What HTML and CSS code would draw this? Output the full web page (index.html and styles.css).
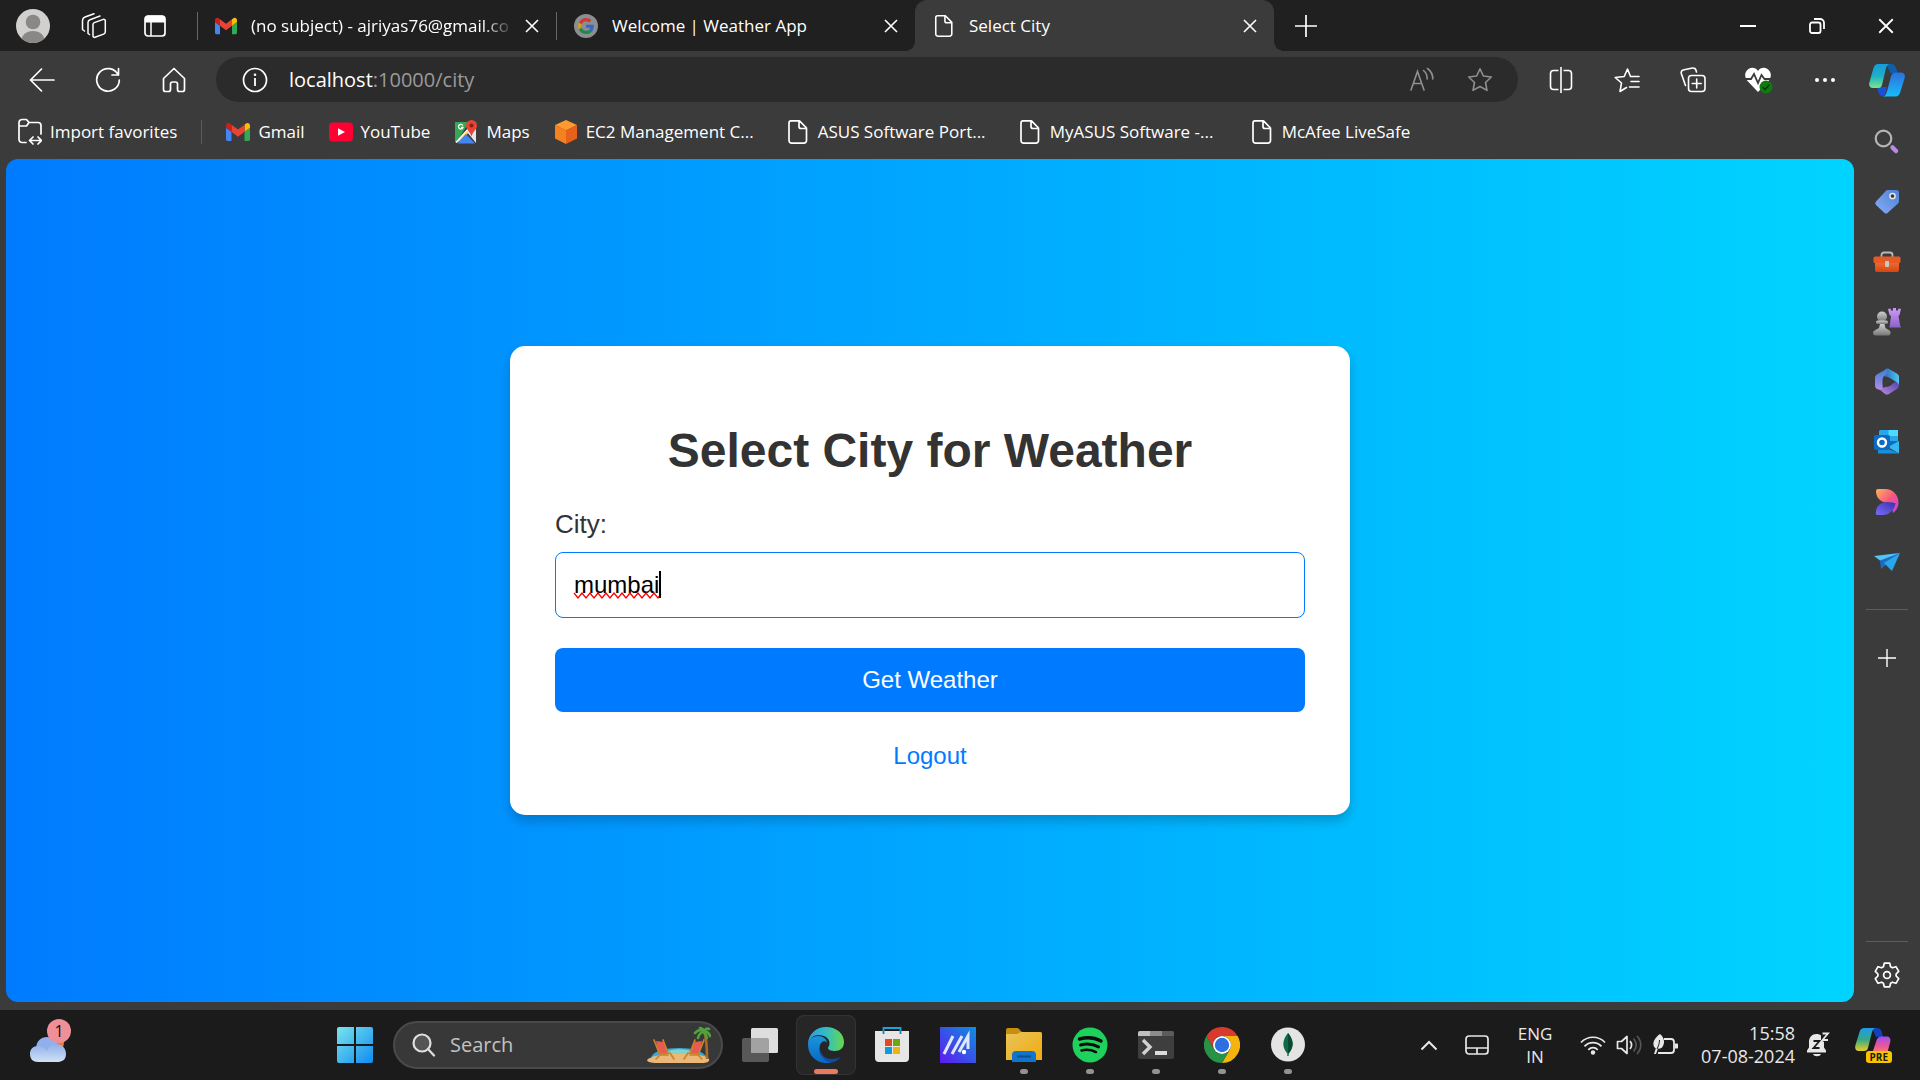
FILE: index.html
```html
<!DOCTYPE html>
<html lang="en">
<head>
<meta charset="utf-8">
<title>Select City</title>
<link rel="stylesheet" href="styles.css">
</head>
<body>
<svg class="defs" width="0" height="0" aria-hidden="true">
  <defs>
    <symbol id="doc" viewBox="0 0 24 24"><path fill="none" stroke="#fff" stroke-width="1.7" stroke-linejoin="round" d="M5 .9h8.500L20.500 8v12.600a2.500 2.500 0 0 1-2.500 2.500H5.500A2.500 2.500 0 0 1 3 20.600V3A2.100 2.100 0 0 1 5 .9zM13 1v5.500A2 2 0 0 0 15 8.500h5.500"/></symbol>
    <symbol id="x" viewBox="0 0 16 16"><path fill="none" stroke="#fff" stroke-width="1.600" d="M2 2l12 12M14 2L2 14"/></symbol>
    <symbol id="gmail" viewBox="52 42 88 66"><path fill="#4285f4" d="M58 108h14V74L52 59v43c0 3.320 2.690 6 6 6"/><path fill="#34a853" d="M120 108h14c3.320 0 6-2.690 6-6V59l-20 15"/><path fill="#fbbc04" d="M120 48v26l20-15v-8c0-7.420-8.470-11.650-14.400-7.200"/><path fill="#ea4335" d="M72 74V48l24 18 24-18v26L96 92"/><path fill="#c5221f" d="M52 51v8l20 15V48l-5.600-4.200c-5.940-4.450-14.400-.22-14.400 7.200"/></symbol>
    <linearGradient id="gCopA" x1="0" y1="0" x2="0" y2="1"><stop offset="0" stop-color="#169bdc"/><stop offset=".5" stop-color="#1cb0c8"/><stop offset="1" stop-color="#7be58a"/></linearGradient>
    <linearGradient id="gCopB" x1="0" y1="0" x2="0" y2="1"><stop offset="0" stop-color="#2d6fdc"/><stop offset="1" stop-color="#16bdfb"/></linearGradient>
    <linearGradient id="gPreA" x1="0" y1="0" x2="0" y2="1"><stop offset="0" stop-color="#1f9be8"/><stop offset=".5" stop-color="#35a88a"/><stop offset="1" stop-color="#e8cf20"/></linearGradient>
    <linearGradient id="gPreB" x1="0" y1="0" x2="0" y2="1"><stop offset="0" stop-color="#a34df0"/><stop offset=".6" stop-color="#ee5a90"/><stop offset="1" stop-color="#ff8a50"/></linearGradient>
    <linearGradient id="gWin" x1="0" y1="0" x2="1" y2="1"><stop offset="0" stop-color="#79e4ee"/><stop offset="1" stop-color="#0f8cf0"/></linearGradient>
    <linearGradient id="gEdgeA" x1="0" y1="0" x2="1" y2="0"><stop offset="0" stop-color="#2a9fe0"/><stop offset=".5" stop-color="#33bcc6"/><stop offset="1" stop-color="#66d94a"/></linearGradient>
    <linearGradient id="gEdgeB" x1="0" y1="0" x2="0" y2="1"><stop offset="0" stop-color="#1b95dc"/><stop offset="1" stop-color="#0768c4"/></linearGradient>
    <linearGradient id="gAsus" x1="0" y1="1" x2="1" y2="0"><stop offset="0" stop-color="#6018f0"/><stop offset="1" stop-color="#0c90e0"/></linearGradient>
    <linearGradient id="gFold" x1="0" y1="0" x2="1" y2="1"><stop offset="0" stop-color="#e9c45c"/><stop offset="1" stop-color="#f0ab0c"/></linearGradient>
    <linearGradient id="gTag" x1="0" y1="1" x2="1" y2="0"><stop offset="0" stop-color="#86aef5"/><stop offset="1" stop-color="#4f7fd6"/></linearGradient>
    <linearGradient id="gBox" x1="0" y1="0" x2="0" y2="1"><stop offset="0" stop-color="#f37440"/><stop offset="1" stop-color="#d8450c"/></linearGradient>
    <linearGradient id="gPawn" x1="0" y1="0" x2="0" y2="1"><stop offset="0" stop-color="#cfcfcf"/><stop offset="1" stop-color="#777"/></linearGradient>
    <linearGradient id="gRook" x1="0" y1="0" x2="0" y2="1"><stop offset="0" stop-color="#d09bf8"/><stop offset="1" stop-color="#8a63c8"/></linearGradient>
    <linearGradient id="gM1" x1="0" y1="0" x2="0" y2="1"><stop offset="0" stop-color="#3f7fd0"/><stop offset="1" stop-color="#b28bec"/></linearGradient>
    <linearGradient id="gM2" x1="0" y1="0" x2="1" y2="0"><stop offset="0" stop-color="#2b60b8"/><stop offset="1" stop-color="#4fc8f0"/></linearGradient>
    <linearGradient id="gM3" x1="0" y1="1" x2="1" y2="0"><stop offset="0" stop-color="#c08ae8"/><stop offset="1" stop-color="#4a3f9c"/></linearGradient>
    <linearGradient id="gD1" x1="0" y1="0" x2="1" y2="1"><stop offset="0" stop-color="#ffb25c"/><stop offset=".5" stop-color="#f7587e"/><stop offset="1" stop-color="#b93ef0"/></linearGradient>
    <linearGradient id="gD2" x1="0" y1="1" x2="1" y2="0"><stop offset="0" stop-color="#7a6cff"/><stop offset="1" stop-color="#3a2fa8"/></linearGradient>
    <linearGradient id="gCloud" x1="0" y1="0" x2="0" y2="1"><stop offset="0" stop-color="#8fb0ea"/><stop offset="1" stop-color="#d3e0f6"/></linearGradient>
  </defs>
</svg>

<header class="tabbar">
  <div class="tools">
    <button class="tool" aria-label="Profile"><svg width="34" height="34" viewBox="0 0 34 34"><clipPath id="av"><circle cx="17" cy="17" r="17"/></clipPath><g clip-path="url(#av)"><path fill="#d2d0ce" d="M0 0h34v34H0z"/><circle cx="17" cy="13" r="7.300" fill="#8a8886"/><path fill="#8a8886" d="M5 34c0-8 5-12 12-12s12 4 12 12z"/></g></svg></button>
    <button class="tool" aria-label="Workspaces"><svg width="26" height="26" viewBox="0 0 26 26" fill="none" stroke="#fff" stroke-width="1.500" stroke-linejoin="round" stroke-linecap="round"><path d="M12 11.500a2 2 0 0 1 1.300-1.900l9-3.200a1.500 1.500 0 0 1 2 1.400v11a2.500 2.500 0 0 1-1.700 2.300L14 24.300a1.500 1.500 0 0 1-2-1.400zM8.500 21.500l-1.500-1v-11a3 3 0 0 1 2-2.800L19 3M3.500 18l-2-1.500v-9A4 4 0 0 1 4 4l9-3.300"/></svg></button>
    <button class="tool" aria-label="Tab actions menu"><svg width="24" height="24" viewBox="0 0 24 24"><rect x="2" y="2" width="20" height="20" rx="3" fill="none" stroke="#fff" stroke-width="1.700"/><path fill="#fff" d="M2 5a3.500 3.500 0 0 1 3.500-3.500h13A3.500 3.500 0 0 1 22 5v3.500H2z"/><path stroke="#fff" stroke-width="1.500" d="M8 8v14"/></svg></button>
  </div>
  <nav class="tabs" aria-label="Tabs">
    <div class="tab">
      <svg class="tabicon" width="22" height="22"><use href="#gmail"/></svg>
      <span class="tabtitle fade">(no subject) - ajriyas76@gmail.co</span>
      <button class="close" aria-label="Close tab"><svg width="16" height="16"><use href="#x"/></svg></button>
    </div>
    <div class="tab">
      <svg class="tabicon" width="24" height="24" viewBox="0 0 48 48"><circle cx="24" cy="24" r="24" fill="#8b8f94"/><g transform="translate(8 8) scale(.67)"><path fill="#d33a2f" d="M24 9.500c3.540 0 6.710 1.220 9.210 3.600l6.850-6.850C35.900 2.380 30.470 0 24 0 14.620 0 6.510 5.380 2.560 13.220l7.980 6.190C12.430 13.720 17.740 9.500 24 9.500z"/><path fill="#3467c8" d="M46.980 24.550c0-1.570-.15-3.090-.38-4.550H24v9.020h12.940c-.58 2.960-2.260 5.480-4.780 7.180l7.730 6c4.510-4.180 7.090-10.360 7.090-17.650z"/><path fill="#d8a010" d="M10.530 28.590a14.500 14.500 0 0 1 0-9.180l-7.980-6.190a24 24 0 0 0 0 21.560z"/><path fill="#238a45" d="M24 48c6.480 0 11.930-2.130 15.890-5.810l-7.730-6c-2.150 1.450-4.920 2.300-8.160 2.300-6.260 0-11.570-4.220-13.470-9.910l-7.980 6.190C6.510 42.620 14.620 48 24 48z"/></g></svg>
      <span class="tabtitle">Welcome | Weather App</span>
      <button class="close" aria-label="Close tab"><svg width="16" height="16"><use href="#x"/></svg></button>
    </div>
    <div class="tab active">
      <svg class="tabicon" width="22" height="24"><use href="#doc"/></svg>
      <span class="tabtitle">Select City</span>
      <button class="close" aria-label="Close tab"><svg width="16" height="16"><use href="#x"/></svg></button>
    </div>
    <button class="newtab" aria-label="New tab"><svg width="22" height="22" viewBox="0 0 22 22"><path stroke="#fff" stroke-width="1.700" d="M11 0v22M0 11h22"/></svg></button>
  </nav>
  <div class="winbtns">
    <button class="win" aria-label="Minimize"><svg width="16" height="16" viewBox="0 0 16 16"><path stroke="#fff" stroke-width="2" d="M0 8h16"/></svg></button>
    <button class="win" aria-label="Restore"><svg width="16" height="16" viewBox="0 0 16 16" fill="none" stroke="#fff" stroke-width="1.800"><rect x="1" y="4.500" width="10.500" height="10.500" rx="2"/><path d="M5 1h6a4 4 0 0 1 4 4v6"/></svg></button>
    <button class="win" aria-label="Close"><svg width="18" height="18"><use href="#x"/></svg></button>
  </div>
</header>

<div class="toolbar">
  <button class="ico" aria-label="Back"><svg width="26" height="26" viewBox="0 0 26 26" fill="none" stroke="#fff" stroke-width="1.700" stroke-linecap="round" stroke-linejoin="round"><path d="M25 13H1.500M12.500 2L1.500 13l11 11"/></svg></button>
  <button class="ico" aria-label="Refresh"><svg width="26" height="26" viewBox="0 0 26 26" fill="none" stroke="#fff" stroke-width="1.700" stroke-linecap="round" stroke-linejoin="round"><path d="M23.200 8A11.300 11.300 0 1 0 24.300 13M23.500 1.500V8H17"/></svg></button>
  <button class="ico" aria-label="Home"><svg width="26" height="26" viewBox="0 0 26 26" fill="none" stroke="#fff" stroke-width="1.700" stroke-linejoin="round"><path d="M2.500 11.500L13 1.500l10.500 10v11a2 2 0 0 1-2 2h-3a2 2 0 0 1-2-2V17a2 2 0 0 0-2-2h-3a2 2 0 0 0-2 2v5.500a2 2 0 0 1-2 2h-3a2 2 0 0 1-2-2z"/></svg></button>
  <div class="address">
    <button class="site" aria-label="View site information"><svg width="26" height="26" viewBox="0 0 26 26"><circle cx="13" cy="13" r="11.500" fill="none" stroke="#fff" stroke-width="1.700"/><circle cx="13" cy="7.800" r="1.300" fill="#fff"/><path stroke="#fff" stroke-width="1.800" d="M13 11v8"/></svg></button>
    <p class="url">localhost<span class="dim">:10000/city</span></p>
    <button class="inbar" aria-label="Read aloud"><svg width="26" height="26" viewBox="0 0 26 26" fill="none" stroke="#8f8f8f" stroke-width="1.600" stroke-linecap="round"><path d="M2 23L8.500 4.500 15 23M4.500 16.500h8M14.500 3.500c2.500 2 3.700 5 3.700 8.500M18.500 1.500c3.500 2.500 5.300 6.300 5.300 10.500"/></svg></button>
    <button class="inbar" aria-label="Add to favorites"><svg width="26" height="26" viewBox="0 0 26 26" fill="none" stroke="#8f8f8f" stroke-width="1.600" stroke-linejoin="round"><path d="M13 1.800l3.400 7.200 7.900 1-5.800 5.500 1.500 7.900-7-3.900-7 3.900 1.500-7.900L1.700 10l7.900-1z"/></svg></button>
  </div>
  <button class="ico" aria-label="Split screen"><svg width="24" height="26" viewBox="0 0 24 26" fill="none" stroke="#fff" stroke-width="1.600"><path d="M9.500 3.500H4.500a3 3 0 0 0-3 3v13a3 3 0 0 0 3 3h5M14.500 3.500h5a3 3 0 0 1 3 3v13a3 3 0 0 1-3 3h-5M12 0v26"/></svg></button>
  <button class="ico" aria-label="Favorites"><svg width="26" height="26" viewBox="0 0 26 26" fill="none" stroke="#fff" stroke-width="1.600" stroke-linejoin="round" stroke-linecap="round"><path d="M25 9.500h-8.500l-3-7.500-3.300 7.500-9 1 6.300 5.500L6 24.500l6.500-4M17 14.500h8M15.500 20h9.500"/></svg></button>
  <button class="ico" aria-label="Collections"><svg width="26" height="26" viewBox="0 0 26 26" fill="none" stroke="#fff" stroke-width="1.600" stroke-linecap="round"><rect x="8.500" y="8.500" width="16.500" height="16" rx="3"/><path d="M16.700 12v9M12.200 16.500h9M5.500 18.500L1.300 6.500A3 3 0 0 1 3 3l9.500-2A3 3 0 0 1 16 3.500l.5 1.500"/></svg></button>
  <button class="ico" aria-label="Browser essentials"><svg width="28" height="28" viewBox="0 0 28 28"><path fill="#fff" d="M13 26L2.500 15C-1 11-.5 5.500 3.500 3 7 .8 11 2 13 5c2-3 6-4.200 9.500-2 4 2.500 4.500 8 1 12z"/><path fill="none" stroke="#3b3b3b" stroke-width="1.800" d="M0 13h6l3-5 4 9 3.500-8 3 4h7"/><circle cx="21" cy="21" r="6.500" fill="#0f7b0f"/><path fill="none" stroke="#063d06" stroke-width="1.600" d="M17.500 21l2.500 2.500 4.500-5"/></svg></button>
  <button class="ico" aria-label="Settings and more"><svg width="22" height="6" viewBox="0 0 22 6" fill="#fff"><circle cx="3" cy="3" r="2"/><circle cx="11" cy="3" r="2"/><circle cx="19" cy="3" r="2"/></svg></button>
  <button class="ico end" aria-label="Copilot"><svg width="36" height="34" viewBox="0 0 36 34"><path fill="#0f5fa8" d="M17 1h5c3 0 4.500 2 5.500 5l1 4h-7z"/><path fill="#1c4fd6" d="M8 24h10l-1 5c-1 3-2 4-4 4s-3-2-4-5z"/><path fill="url(#gCopA)" d="M9 1h12c-2 0-3 1.500-4 4l-4 17c-.6 2-1.500 3-4 3H4c-3.500 0-4.500-2.500-3.500-6l4-14C5.500 2 7 1 9 1z"/><path fill="url(#gCopB)" d="M27 9.500h5c3.500 0 4.500 2.500 3.500 6l-4 13c-1 3.500-2.500 5-5 5H13c3 0 4-2 5-5l4-15c.7-3 2-4 5-4z"/></svg></button>
</div>

<div class="shell">
  <div class="left">
    <nav class="favs" aria-label="Favorites bar">
      <a class="fav" href="#"><svg width="24" height="28" viewBox="0 0 24 28" fill="none" stroke="#fff" stroke-width="1.700" stroke-linecap="round" stroke-linejoin="round"><path d="M8 24.500H4a3 3 0 0 1-3-3V4.500a3 3 0 0 1 3-3h4.500L11 4.500h9a3 3 0 0 1 3 3V16M1 8h7.500L11 4.500M12 22.500h11M15 19l-3.500 3.500L15 26M20 19l3.500 3.500L20 26"/></svg><span class="favname">Import favorites</span></a>
      <span class="favsep"></span>
      <a class="fav" href="#"><svg width="24" height="18"><use href="#gmail"/></svg><span class="favname">Gmail</span></a>
      <a class="fav" href="#"><svg width="24" height="24" viewBox="0 0 24 24"><rect y="2.500" width="24" height="19" rx="4" fill="#f03"/><path fill="#fff" d="M9 8.200l7 3.800-7 3.800z"/></svg><span class="favname">YouTube</span></a>
      <a class="fav" href="#"><svg width="24" height="24" viewBox="0 0 24 24"><path fill="#34a853" d="M1 2h14L3 22H1z"/><path fill="#fbc02d" d="M18 5L2 23l4-2L20 8z"/><path fill="#e4e6ea" d="M13 12l9 11V9l-4-4z"/><path fill="#4285f4" d="M3.500 23.500L12 14l9 9.500z"/><path fill="none" stroke="#fff" stroke-width="1.600" d="M2 22.500L17 6"/><path fill="none" stroke="#fff" stroke-width="1.300" d="M8.800 5.500A2.300 2.300 0 1 0 9 7.500H7"/><path fill="#ea4335" d="M17.500 0A5.500 5.500 0 0 1 23 5.500c0 4-4.500 6-5.500 11.500C16.500 11.500 12 9.500 12 5.500A5.500 5.500 0 0 1 17.500 0z"/><circle cx="17.500" cy="5.500" r="2" fill="#8c1d18"/></svg><span class="favname">Maps</span></a>
      <a class="fav long" href="#"><svg width="24" height="24" viewBox="0 0 24 24"><path fill="#ff9a2e" d="M12 0l11 5-11 5.500L1 5z"/><path fill="#f58220" d="M1 5l11 5.500V24L1 18.500z"/><path fill="#e8611a" d="M23 5l-11 5.500V24l11-5.500z"/></svg><span class="favname">EC2 Management C...</span></a>
      <a class="fav long" href="#"><svg width="24" height="24"><use href="#doc"/></svg><span class="favname">ASUS Software Port...</span></a>
      <a class="fav long" href="#"><svg width="24" height="24"><use href="#doc"/></svg><span class="favname">MyASUS Software -...</span></a>
      <a class="fav" href="#"><svg width="24" height="24"><use href="#doc"/></svg><span class="favname">McAfee LiveSafe</span></a>
    </nav>
    <main class="page">
      <section class="card">
        <h1 class="title">Select City for Weather</h1>
        <form class="form">
          <label class="label" for="city">City:</label>
          <div class="field">
            <input class="input" id="city" type="text" value="mumbai" spellcheck="false">
            <svg class="spell" width="90" height="30" viewBox="0 0 90 30" aria-hidden="true"><path fill="none" stroke="#f00" stroke-width="1.300" d="M1 23l4 5 4-5 4 5 4-5 4 5 4-5 4 5 4-5 4 5 4-5 4 5 4-5 4 5 4-5 4 5 4-5 4 5 4-5 4 5 4-5 4 5 3-4"/><path stroke="#000" stroke-width="2" d="M87 1v27"/></svg>
          </div>
          <button class="submit" type="button">Get Weather</button>
        </form>
        <a class="logout" href="#">Logout</a>
      </section>
    </main>
  </div>
  <aside class="side">
    <button class="app" aria-label="Search"><svg width="26" height="26" viewBox="0 0 26 26" fill="none"><circle cx="9.500" cy="9.500" r="7.800" stroke="#b5b5b5" stroke-width="2.200"/><path stroke="#b98be8" stroke-width="4.500" stroke-linecap="round" d="M18.500 18.500l3.500 3.500"/></svg></button>
    <button class="app" aria-label="Shopping"><svg width="26" height="26" viewBox="0 0 26 26"><path fill="url(#gTag)" d="M14 1h8.500A2.500 2.500 0 0 1 25 3.500V12c0 1-.5 2-1 2.500L13.500 24a2.500 2.500 0 0 1-3 0L2 16a2.500 2.500 0 0 1 0-3.500L12 1.800A3 3 0 0 1 14 1z"/><circle cx="18.500" cy="7" r="2.600" fill="#333" stroke="#e8e8e8" stroke-width="1.500"/></svg></button>
    <button class="app" aria-label="Tools"><svg width="28" height="22" viewBox="0 0 28 22"><path fill="none" stroke="#b8b8b8" stroke-width="1.800" d="M8.500 6V4a2.500 2.500 0 0 1 2.500-2.500h6A2.500 2.500 0 0 1 19.500 4v2"/><path fill="url(#gBox)" d="M2 9h24v10a2 2 0 0 1-2 2H4a2 2 0 0 1-2-2z"/><rect x=".5" y="5.500" width="27" height="6.500" rx="1.500" fill="#e65a24"/><rect x="12" y="10" width="4" height="6" rx="1" fill="#c8c8c8"/></svg></button>
    <button class="app" aria-label="Games"><svg width="28" height="28" viewBox="0 0 28 28"><path fill="url(#gRook)" d="M15 1l2.500-.5.5 2h2V0h3v2.500h2l.5-2L28 1l-1.500 6-1 1L27 17l1 2.500H16.500L18 8l-1.500-1z"/><g fill="url(#gPawn)"><circle cx="9" cy="8.500" r="5"/><rect x="3" y="12.500" width="12" height="3.500" rx="1.700"/><path d="M7 16h4.500l1 4 4 2.500c2 1.500 1 5-1 5h-13c-2.500 0-3.500-3.500-1-5L6 20z"/></g></svg></button>
    <button class="app" aria-label="Microsoft 365"><svg width="26" height="28" viewBox="0 0 26 28"><path fill="url(#gM3)" d="M5 21l3.500-1 9-3.500 7.500-5V17c0 2-.8 3.200-2.200 4L15 26c-1.400.8-2.600.8-4 0z"/><path fill="url(#gM2)" d="M10 2.500L12 1c1-.6 2-.6 3 0l7.800 4.500C24.200 6.300 25 7.500 25 9v8c-.5-1.500-1.500-2.500-3-3.300L14 9l-5-1z"/><path fill="url(#gM1)" d="M13 .8L3.200 6.300C1.800 7.200 1 8.400 1 10v7.500c0 1.600.8 2.800 2.200 3.600 1.900 1 3.900.9 5.500-.6V11c0-1.600.7-2.700 2-3.500 2-1.200 2.800-2.500 2.800-4.500z"/><path fill="#3b3b3b" d="M13.500 9.200l4.300 2.500v5L13.500 19l-4.800-2.300v-5z"/></svg></button>
    <button class="app" aria-label="Outlook"><svg width="26" height="26" viewBox="0 0 26 26"><rect x="5" y="1" width="19" height="14" rx="1.500" fill="#28a8ea"/><path fill="#50d9ff" d="M14.500 1H24v6h-9.500z"/><path fill="#0f6cbd" d="M5 12h20v5H5z"/><path fill="#1490df" d="M4 24.500V15l21 9.500z"/><path fill="#35b8f1" d="M25 12v12.500L14 18z"/><rect x="0" y="6" width="16" height="15" rx="2" fill="#0a6ac4"/><circle cx="8" cy="13.500" r="4" fill="none" stroke="#fff" stroke-width="2.400"/></svg></button>
    <button class="app" aria-label="Designer"><svg width="24" height="26" viewBox="0 0 24 26"><path fill="url(#gD1)" d="M3 0h7c8 0 13.500 6 13.500 13.500 0 4-2 8-5.500 10.500-1-8-3-10-8-10.500C4.500 12 1 8 1 2a2 2 0 0 1 2-2z"/><path fill="url(#gD2)" d="M1 23c0-6 5-10 11-10 5 0 8 1.500 8.500 1-1 7-6 12-12.500 12H3a2 2 0 0 1-2-3z"/></svg></button>
    <button class="app" aria-label="Drop"><svg width="26" height="20" viewBox="0 0 26 20"><path fill="#4fc6f4" d="M0 4L26 1 8 10z"/><path fill="#1a6dc4" d="M6 8.500L26 1 7 17z"/><path fill="#2aa6ea" d="M10 11L26 1l-8 18z"/></svg></button>
    <span class="sidesep"></span>
    <button class="app add" aria-label="Customize"><svg width="18" height="18" viewBox="0 0 18 18"><path stroke="#fff" stroke-width="1.400" d="M9 0v18M0 9h18"/></svg></button>
    <span class="sidesep last"></span>
    <button class="app gear" aria-label="Settings"><svg width="26" height="26" viewBox="0 0 26 26" fill="none" stroke="#fff" stroke-width="1.700" stroke-linejoin="round"><path d="M10.300 1.200h5.400l.9 3.600 1.800 1 3.600-1.100 2.700 4.700-2.600 2.600v2l2.600 2.600-2.700 4.700-3.600-1.100-1.800 1-.9 3.600h-5.400l-.9-3.600-1.800-1L4 21.300l-2.700-4.700L3.900 14v-2L1.300 9.400 4 4.700l3.600 1.100 1.800-1z"/><circle cx="13" cy="13" r="3.400"/></svg></button>
  </aside>
</div>

<footer class="taskbar">
  <button class="weather" aria-label="Weather"><svg width="38" height="30" viewBox="0 0 38 30"><circle cx="28" cy="9" r="7" fill="#f0801e"/><path fill="#8fb0ea" d="M7 15C7 7 12 3 18 3s11 4 11 10v8H7z"/><path fill="url(#gCloud)" d="M9 12c4 0 7 2 9 5 1-4 4-7 9-7 6 0 10 4 10 10s-4 8-9 8H9c-5 0-8-3-8-8s3-8 8-8z"/></svg><span class="badge">1</span></button>
  <div class="apps">
    <button class="task" aria-label="Start"><svg width="36" height="36" viewBox="0 0 36 36"><path fill="url(#gWin)" d="M2 0h15v17H0V2a2 2 0 0 1 2-2zM19 0h15a2 2 0 0 1 2 2v15H19zM0 19h17v17H2a2 2 0 0 1-2-2zM19 19h17v15a2 2 0 0 1-2 2H19z"/></svg></button>
    <div class="search">
      <svg width="24" height="24" viewBox="0 0 24 24" fill="#555" stroke="#e0e0e0" stroke-width="2.200" stroke-linecap="round"><circle cx="10" cy="10" r="8.500"/><path d="M16 16l6 6.500"/></svg>
      <input class="searchbox" type="text" placeholder="Search" aria-label="Search">
      <svg width="64" height="38" viewBox="0 0 64 38"><path fill="#3aa7d8" d="M4 31c3-6 14-9 28-9s23 3 28 9z"/><path fill="#7fd6c8" d="M20 27c0-5 24-5 26 0l-4 4H24z"/><path fill="#eab97a" d="M0 34c4-4 14-6 31-6s28 1 31 5c1 3-3 4-7 4H10c-6 0-10-1-10-3z"/><path fill="#e85a52" d="M9 15l7 1 5 11 -9 2zM55 15l-7 1-5 11 9 2z"/><g fill="none" stroke="#c9852a" stroke-width="1.700" stroke-linecap="round"><path d="M7 14l6 15M16 14l5 13M9 33l5-5 9-1M23 27l4 6M13 29h8M57 14l-6 15M48 14l-5 13M55 33l-5-5-9-1M41 27l-4 6M51 29h-8"/></g><path fill="none" stroke="#b06a20" stroke-width="2.600" d="M57 5c3 8 3 18 3 28"/><path fill="none" stroke="#4fa23c" stroke-width="2.600" stroke-linecap="round" d="M57 6c-3-3-6-2-9 1M57 6c-3 0-5 2-6 6M57 6c0-2-2-4-4-4M57 6c1-3 3-4 5-3M57 6c3-1 5 1 6 4M57 6c1 1 3 3 3 6"/></svg>
    </div>
    <button class="task" aria-label="Task view"><svg width="36" height="34" viewBox="0 0 36 34"><rect x="0" y="10" width="27" height="24" rx="2" fill="#585858"/><rect x="9" y="0" width="27" height="25" rx="1.500" fill="#dedede"/><path fill="#a2a2a2" d="M9 10h16a2 2 0 0 1 2 2v13H9z"/></svg></button>
    <button class="task on" aria-label="Microsoft Edge"><svg width="36" height="36" viewBox="0 0 36 36"><path fill="#0f4c9c" d="M12 18c-1 8 4 14 12 14 4 0 8-1 9.500-3-3 4.500-8 7-13.500 7C11 36 6 29 7 22z"/><path fill="url(#gEdgeB)" d="M0 18c0-5 4-9 10-9 5 0 9 3 9 7-1-2-3-2.500-5-1-4 4-4 11 1 16 3 3 5 4 8 4.500-2 .5-4 .5-6 .5C8 35.500 0 28 0 18z"/><path fill="url(#gEdgeA)" d="M0 18C0 7 8 0 18 0c11 0 18 7 18 15 0 6-4 9-9 9-4 0-7-1-7-3 0-1 1.500-2 1.500-5 0-4-4-8-11-8C5 8 1 12 0 18z"/></svg><span class="mark run"></span></button>
    <button class="task" aria-label="Microsoft Store"><svg width="36" height="36" viewBox="0 0 36 36"><path fill="none" stroke="#1fa4d6" stroke-width="1.800" d="M9.500 7V1h17v6"/><path fill="#e6e6e6" d="M1 4h34v27a4 4 0 0 1-4 4H5a4 4 0 0 1-4-4z"/><path fill="none" stroke="#1b7fb0" stroke-width="1.800" d="M9.500 4v3M26.500 4v3"/><path fill="#e04a22" d="M11 12h7v7h-7z"/><path fill="#6fa80c" d="M19 12h7v7h-7z"/><path fill="#0f9ae0" d="M11 20h7v7h-7z"/><path fill="#efb40c" d="M19 20h7v7h-7z"/></svg></button>
    <button class="task" aria-label="MyASUS"><svg width="36" height="36" viewBox="0 0 36 36"><path fill="url(#gAsus)" d="M0 0h36v36H0z"/><g fill="none" stroke="#dfe6ff" stroke-width="3"><path d="M4 27l9-18M12 27L22 9"/><path d="M19 25l9-16v13"/></g><circle cx="24" cy="25" r="2.200" fill="#fff"/></svg></button>
    <button class="task" aria-label="File Explorer"><svg width="36" height="34" viewBox="0 0 36 34"><path fill="#c98f0c" d="M0 2a2 2 0 0 1 2-2h9c3 0 3 4 6 4h17a2 2 0 0 1 2 2v8H0z"/><path fill="url(#gFold)" d="M0 6h11l4-2h19a2 2 0 0 1 2 2v26H0z"/><path fill="#1173cc" d="M6 34V27a4 4 0 0 1 4-4h16a4 4 0 0 1 4 4v7z"/><path stroke="#0a4f94" stroke-width="2" d="M11 28.500h14"/></svg><span class="mark"></span></button>
    <button class="task" aria-label="Spotify"><svg width="36" height="36" viewBox="0 0 36 36"><circle cx="18" cy="18" r="17.500" fill="#1ed05c"/><g fill="none" stroke="#0c0c0c" stroke-linecap="round"><path stroke-width="3.400" d="M7.500 12c7-2 15-1.500 21.500 2"/><path stroke-width="2.900" d="M8.500 18c6-1.700 12.500-1 18 1.900"/><path stroke-width="2.400" d="M9.500 23.500c5-1.300 10-.7 14.500 1.600"/></g></svg><span class="mark"></span></button>
    <button class="task" aria-label="Terminal"><svg width="36" height="28" viewBox="0 0 36 28"><rect width="36" height="28" rx="2" fill="#3e3e3e"/><path fill="#c0c0c0" d="M2 0h10v5H0V2a2 2 0 0 1 2-2z"/><path fill="#8c8c8c" d="M12 0h12v5H12z"/><path fill="#5c5c5c" d="M24 0h10a2 2 0 0 1 2 2v3H24z"/><path fill="none" stroke="#d2d2d2" stroke-width="3.400" d="M5 9l7 7-7 7"/><path stroke="#dcdcdc" stroke-width="4" d="M17 22h12"/></svg><span class="mark"></span></button>
    <button class="task" aria-label="Google Chrome"><svg width="36" height="36" viewBox="0 0 36 36"><path fill="#d93a2e" d="M2.400 9A18 18 0 0 1 33.600 9H18a9 9 0 0 0-8 13.500z"/><path fill="#f4b40c" d="M33.600 9A18 18 0 0 1 18 36l7.800-13.500A9 9 0 0 0 18 9z"/><path fill="#279347" d="M2.400 9A18 18 0 0 0 18 36l7.800-13.500a9 9 0 0 1-15.600 0z"/><circle cx="18" cy="18" r="9" fill="#fff"/><circle cx="18" cy="18" r="7.200" fill="#2c6fe0"/></svg><span class="mark"></span></button>
    <button class="task" aria-label="MongoDB Compass"><svg width="36" height="36" viewBox="0 0 36 36"><circle cx="18" cy="17.500" r="17" fill="#e4e4e4"/><path fill="#0f6b48" d="M18 6c5 6 7 13 .7 20.500V29h-1.400v-2.500C11 19 13 12 18 6z"/><path fill="#0a4a34" d="M18 6c5 6 7 13 .7 20.500H18z"/></svg><span class="mark"></span></button>
  </div>
  <div class="tray">
    <button class="tico" aria-label="Show hidden icons"><svg width="18" height="12" viewBox="0 0 18 12" fill="none" stroke="#e8e8e8" stroke-width="2"><path d="M1.500 10.500L9 3l7.500 7.500"/></svg></button>
    <button class="tico wide" aria-label="Touchpad"><svg width="24" height="20" viewBox="0 0 24 20" fill="none" stroke="#e8e8e8" stroke-width="1.700"><rect x="1" y="1" width="22" height="18" rx="3"/><path d="M1 13h22M12 13v6"/></svg></button>
    <button class="lang" aria-label="Input language">ENG<br>IN</button>
    <button class="status" aria-label="Network, sound, battery">
      <svg width="26" height="20" viewBox="0 0 26 20" fill="none" stroke="#e8e8e8" stroke-width="1.700"><path d="M1 7.500C7.500.5 18.500.5 25 7.500M4.500 11.300c4.700-5 12.300-5 17 0M8.300 14.800c2.600-2.800 6.800-2.800 9.400 0"/><circle cx="13" cy="17.500" r="2.200" fill="#e8e8e8" stroke="none"/></svg>
      <svg width="26" height="22" viewBox="0 0 26 22" fill="none" stroke="#e8e8e8" stroke-width="1.700" stroke-linejoin="round"><path d="M1.500 7.500h4L11 2.500v17l-5.500-5h-4zM14 7c2 2.500 2 5.500 0 8"/><path stroke="#555" d="M17.500 4.500c3.300 4 3.300 9 0 13M21 2c5 5.500 5 12.500 0 18"/></svg>
      <svg width="26" height="22" viewBox="0 0 26 22"><path fill="none" stroke="#e8e8e8" stroke-width="1.800" d="M12 5h7a3 3 0 0 1 3 3v8a3 3 0 0 1-3 3H6"/><path fill="#e8e8e8" d="M23 9.500h1.500a1.500 1.500 0 0 1 0 5H23z"/><path fill="#e8e8e8" d="M8 0c5 4 5 10 2 13.500-1 1-2.500 1.500-4 1L4 20H2l1.800-5.500C-1 11 2 4 8 0z"/><path fill="none" stroke="#1b1b1b" d="M7.500 6c0 3-1 6-2.500 9"/></svg>
    </button>
    <button class="clock" aria-label="Clock">15:58<br>07-08-2024</button>
    <button class="bell" aria-label="Notifications"><svg width="24" height="26" viewBox="0 0 24 26"><path fill="#e8e8e8" d="M1 18.500l2-3V10c0-5 3-8 7.500-8 2 0 3.500.5 4.500 1.500V8l3 2v5.500l2 3v2H1zM7 22h8c-1 3-7 3-8 0z"/><path fill="none" stroke="#1b1b1b" stroke-width="1.800" d="M7.500 9h6l-6 7h6"/><path fill="none" stroke="#e8e8e8" stroke-width="1.800" d="M16.500 1.500H22l-5.500 6.500H22"/></svg></button>
    <button class="copilot" aria-label="Copilot preview"><svg width="36" height="34" viewBox="0 0 36 34"><path fill="#1440b8" d="M17 0h5c3 0 4.500 2 5 5l1 4h-7z"/><path fill="url(#gPreA)" d="M9 0h12c-2 0-3 1.500-4 4l-4 16c-.6 2-1.500 3-4 3H4c-3.500 0-4.500-2.500-3.500-6l4-13C5.500 1 7 0 9 0z"/><path fill="url(#gPreB)" d="M27 8.500h4.500c3 0 4.500 2 3.700 5.500L32 26H17l4.500-13.500c1-3 2.500-4 5.500-4z"/></svg><span class="pre">PRE</span></button>
  </div>
</footer>
</body>
</html>
```
FILE: styles.css
```css
* { box-sizing: border-box; }

body {
  margin: 0;
  min-height: 100vh;
  display: flex;
  flex-direction: column;
  background: #3b3b3b;
  color: #fff;
  font: 17px/24px "Open Sans", "Noto Sans", sans-serif;
}

button {
  border: 0;
  padding: 0;
  background: none;
  color: inherit;
  font: inherit;
  display: flex;
  align-items: center;
  justify-content: center;
}

svg { display: block; flex: none; }
.defs { position: absolute; }

/* tab strip */
.tabbar {
  display: flex;
  height: 51px;
  background: #202020;
}
.tools { display: flex; padding: 0 12px 0 2px; }
.tool { width: 61px; }
.tabs { display: flex; flex: 1; min-width: 0; }
.tab {
  display: flex;
  align-items: center;
  flex: 0 1 359px;
  min-width: 0;
  gap: 14px;
  padding: 0 8px 0 18px;
  position: relative;
}
.tab:not(.active)::before {
  content: "";
  position: absolute;
  left: 0;
  top: 12px;
  width: 1px;
  height: 28px;
  background: #666;
}
.tab.active { background: #3b3b3b; border-radius: 12px 12px 0 0; }
.tab.active::before,
.tab.active::after {
  content: "";
  position: absolute;
  bottom: 0;
  width: 10px;
  height: 10px;
}
.tab.active::before { left: -10px; background: radial-gradient(circle at 0 0, transparent 10px, #3b3b3b 10px); }
.tab.active::after { right: -10px; background: radial-gradient(circle at 100% 0, transparent 10px, #3b3b3b 10px); }
.tabtitle { flex: 1; min-width: 0; overflow: hidden; white-space: nowrap; }
.fade { mask-image: linear-gradient(to right, #000 88%, transparent); }
.close { width: 32px; height: 32px; margin-left: -12px; }
.newtab { width: 64px; }
.winbtns { display: flex; }
.win { width: 69px; }

/* address row */
.toolbar { display: flex; align-items: center; height: 57px; padding-left: 9px; }
.ico { width: 66px; height: 45px; }
.end { width: 62px; padding-right: 4px; }
.address {
  display: flex;
  align-items: center;
  flex: 1;
  height: 45px;
  margin: 0 10px 0 9px;
  padding: 0 9px 0 16px;
  border-radius: 23px;
  background: #2b2b2b;
}
.site { width: 46px; height: 45px; }
.url { flex: 1; margin: 0; padding-left: 11px; font-size: 20px; }
.dim { color: #9a9a9a; }
.inbar { width: 58px; height: 45px; }

/* page and sidebar */
.shell { display: flex; flex: 1; }
.left { flex: 1; min-width: 0; display: flex; flex-direction: column; padding: 0 0 8px 6px; }
.favs { display: flex; align-items: center; gap: 24px; height: 51px; padding: 0 0 4px 12px; }
.fav {
  display: flex;
  align-items: center;
  gap: 8px;
  color: #fff;
  text-decoration: none;
}
.long { width: 208px; }
.favname { white-space: nowrap; }
.favsep { width: 1px; height: 24px; background: #5c5c5c; }
.page {
  flex: 1;
  display: flex;
  align-items: center;
  justify-content: center;
  border-radius: 12px;
  background: linear-gradient(to right, #007bff, #00d4ff);
  font-family: "Liberation Sans", Arial, sans-serif;
}
.card {
  width: 840px;
  max-width: 100%;
  padding: 77px 45px 44px;
  border-radius: 15px;
  background: #fff;
  color: #333;
  text-align: center;
  box-shadow: 0 6px 12px rgba(0, 0, 0, .2);
}
.title { margin: 0 0 30px; font-size: 48px; line-height: 56px; font-weight: 700; }
.form { display: flex; flex-direction: column; text-align: left; }
.label { margin-bottom: 13px; font-size: 26px; line-height: 30px; }
.field { position: relative; display: flex; margin-bottom: 30px; }
.input {
  width: 100%;
  height: 66px;
  padding: 0 18px;
  border: 1px solid #007bff;
  border-radius: 8px;
  background: #fff;
  color: #000;
  caret-color: transparent;
  font: 24px/30px "Liberation Sans", Arial, sans-serif;
  outline: 0;
}
.spell { position: absolute; left: 18px; top: 18px; pointer-events: none; }
.submit {
  height: 64px;
  border-radius: 8px;
  background: #007bff;
  color: #fff;
  font-size: 24px;
}
.logout {
  display: inline-block;
  margin-top: 30px;
  color: #007bff;
  font-size: 24px;
  line-height: 28px;
  text-decoration: none;
}

.side { display: flex; flex-direction: column; align-items: center; width: 66px; padding-top: 4px; }
.app { width: 60px; height: 60px; }
.sidesep { width: 42px; height: 1px; margin-top: 17px; background: #5c5c5c; }
.add { margin-top: 18px; }
.last { margin-top: auto; }
.gear { height: 68px; padding-bottom: 2px; }

/* taskbar */
.taskbar {
  display: flex;
  align-items: center;
  height: 70px;
  background: #1b1b1b;
  color: #e8e8e8;
}
.weather { flex: 0 1 322px; justify-content: flex-start; padding: 8px 0 0 29px; position: relative; }
.badge {
  position: absolute;
  left: 47px;
  top: -7px;
  width: 24px;
  height: 24px;
  border-radius: 50%;
  background: #ef8f98;
  color: #111;
  font-size: 16px;
}
.apps { display: flex; align-items: center; }
.task { position: relative; width: 60px; height: 60px; margin: 0 3px; border-radius: 8px; }
.on { background: #262626; box-shadow: inset 0 0 0 1px #333; }
.mark { position: absolute; bottom: 1px; left: 26px; width: 8px; height: 5px; border-radius: 3px; background: #929292; }
.run { left: 18px; width: 24px; background: #ea7961; }
.search {
  display: flex;
  align-items: center;
  gap: 14px;
  width: 330px;
  height: 48px;
  margin: 0 4px 0 5px;
  padding: 0 10px 0 17px;
  border: 2px solid #4a4a4a;
  border-radius: 24px;
  background: #383838;
}
.searchbox {
  flex: 1;
  min-width: 0;
  border: 0;
  padding: 0;
  background: none;
  color: #ccc;
  font: 20px/28px "Open Sans", "Noto Sans", sans-serif;
  outline: 0;
}
.searchbox::placeholder { color: #c2c2c2; }
.tray { flex: 1 1 0; display: flex; align-items: center; justify-content: flex-end; line-height: 23px; }
.tico { width: 44px; height: 48px; }
.wide { width: 52px; }
.lang { width: 64px; margin-right: 6px; display: block; text-align: center; }
.status { gap: 10px; width: 112px; height: 48px; }
.clock { display: block; width: 110px; text-align: right; font-size: 18px; line-height: 23px; }
.bell { width: 46px; }
.copilot { position: relative; width: 36px; margin: 0 29px 0 14px; }
.pre {
  position: absolute;
  right: -1px;
  bottom: -1px;
  padding: 0 4px;
  border-radius: 3px;
  background: #f8c400;
  color: #1b1b1b;
  font-size: 10px;
  line-height: 12px;
  font-weight: 700;
}
```
